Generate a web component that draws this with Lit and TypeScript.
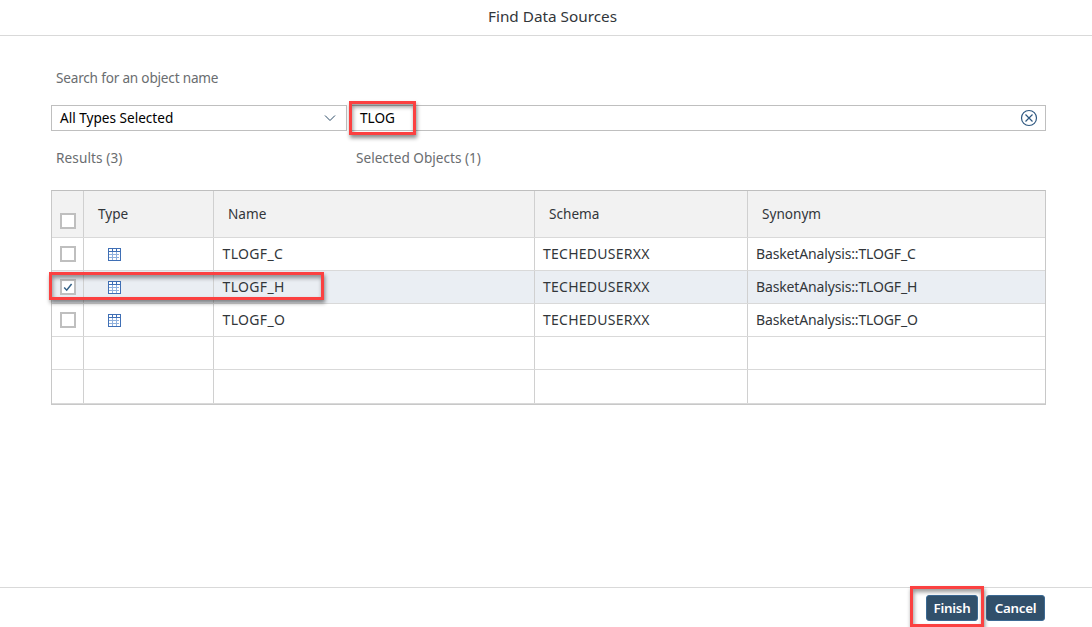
import { LitElement, html, css, svg, nothing } from "lit";
import { customElement, property } from "lit/decorators.js";

interface Source { name: string; schema: string; synonym: string; checked?: boolean }

const ROWS: (Source | null)[] = [
  { name: "TLOGF_C", schema: "TECHEDUSERXX", synonym: "BasketAnalysis::TLOGF_C" },
  { name: "TLOGF_H", schema: "TECHEDUSERXX", synonym: "BasketAnalysis::TLOGF_H", checked: true },
  { name: "TLOGF_O", schema: "TECHEDUSERXX", synonym: "BasketAnalysis::TLOGF_O" },
  null,
  null,
];

@customElement("check-box")
class CheckBox extends LitElement {
  @property({ type: Boolean }) checked = false;
  static styles = css`
    :host { display: block; box-sizing: border-box; width: 16px; height: 16px; border: 2px solid #bfbfbf; background: #fff; }
    svg { display: block; }
  `;
  render() {
    return this.checked
      ? html`<svg width="12" height="12" viewBox="0 0 12 12"><path d="M2.2 6.6 4.7 9.2 9.6 3" fill="none" stroke="#346187" stroke-width="1.5"/></svg>`
      : nothing;
  }
}

@customElement("table-icon")
class TableIcon extends LitElement {
  static styles = css`:host, svg { display: block; }`;
  render() {
    return html`<svg width="13" height="13" viewBox="0 0 13 13" shape-rendering="crispEdges">
      <rect width="13" height="13" rx="1" fill="#3f6fb5"/>
      <rect x="1" y="1" width="11" height="2" fill="#fff"/>
      <rect x="1" y="4" width="11" height="8" fill="#fff"/>
      <path d="M4.5 1v2M8.5 1v2" stroke="#3f6fb5"/>
      <path d="M4.5 4v8M8.5 4v8" stroke="#8fb0dd"/>
      ${[6, 9].map((y) => svg`<path d=${`M1 ${y + 0.5}h10`} stroke="#8fb0dd"/>`)}
    </svg>`;
  }
}

@customElement("app-root")
class AppRoot extends LitElement {
  static styles = css`
    * { box-sizing: border-box; }
    :host { display: flex; flex-direction: column; position: relative; width: 100%; height: 627px; overflow: hidden;
      background: #fff; color: #32363a; font: 13.6px/20px "Noto Sans", sans-serif; white-space: nowrap; }
    .title { height: 36px; border-bottom: 1px solid #d9d9d9; display: flex; justify-content: center; padding: 6px 0 0 13px; font-size: 15.3px; }
    .body { flex: 1; padding: 32px 46px 0 51px; }
    .muted { color: #6a6d70; }
    .label { padding-left: 5px; letter-spacing: -0.2px; }
    .search { display: flex; gap: 3px; margin-top: 17px; color: #000; }
    .box { height: 26px; border: 1px solid #bfbfbf; display: flex; align-items: center; justify-content: space-between; padding-left: 8px; }
    .select { width: 296px; padding-right: 10px; }
    .input { flex: 1; padding: 0 7px 0 9px; }
    .counts { display: grid; grid-template-columns: 300px 1fr; margin-top: 17px; padding-left: 5px; }
    .results { letter-spacing: 0.1px; }
    .table { margin-top: 22px; height: 215px; border: 1px solid #c8c8c8; border-top-color: #bfbfbf; }
    .row { display: grid; grid-template-columns: 32px 130px 321px 213px 1fr; height: 33px; border-bottom: 1px solid #d9d9d9; font-size: 14px; }
    .cell { border-right: 1px solid #d0d0d0; display: flex; align-items: center; padding-left: 8px; }
    .cell:last-child { border-right: 0; }
    .cell.check { padding-left: 8px; }
    .cell.icon { padding-left: 24px; }
    .name { letter-spacing: 0.35px; }
    .cell.name { padding-left: 8.5px; }
    .schema { letter-spacing: 0.25px; }
    .synonym { letter-spacing: -0.15px; }
    .head { height: 47px; background: #f2f2f2; font-size: 13.6px; }
    .head .cell { padding-left: 14px; }
    .head .check { padding: 13px 0 0 8px; }
    .selected { background: #eaeef3; }
    .row:last-child { height: 34px; }
    .footer { height: 40px; border-top: 1px solid #d9d9d9; display: flex; justify-content: flex-end; gap: 8px; padding: 7px 47px 0 0; }
    .button { height: 26px; border-radius: 3px; background: #31506b; border: 1px solid #3c6a94; color: #fff; font-size: 13.33px; font-weight: 600; text-align: center; line-height: 24px; letter-spacing: -0.25px; }
    .finish { width: 52px; }
    .cancel { width: 59px; }
    .mark { position: absolute; border: 3px solid #fb4141; box-shadow: 1px 3px 4px rgba(0,0,0,.45), inset 1px 3px 4px rgba(0,0,0,.4); }
    .mark-input { left: 349px; top: 101px; width: 67px; height: 34px; }
    .mark-row { left: 49px; top: 272px; width: 275px; height: 28px; }
    .mark-finish { left: 910px; top: 586px; width: 74px; height: 41px; }
  `;

  private row(r: Source | null) {
    return html`<div class="row ${r?.checked ? "selected" : ""}">
      <div class="cell check">${r ? html`<check-box ?checked=${!!r.checked}></check-box>` : nothing}</div>
      <div class="cell icon">${r ? html`<table-icon></table-icon>` : nothing}</div>
      <div class="cell name"><span>${r?.name}</span></div>
      <div class="cell schema"><span>${r?.schema}</span></div>
      <div class="cell synonym"><span>${r?.synonym}</span></div>
    </div>`;
  }

  render() {
    return html`
      <div class="title"><span>Find Data Sources</span></div>
      <div class="body">
        <div class="label muted">Search for an object name</div>
        <div class="search">
          <div class="box select"><span>All Types Selected</span>
            <svg width="12" height="8" viewBox="0 0 12 8"><path d="M1 1.5 6 6.5 11 1.5" fill="none" stroke="#2b4a66"/></svg>
          </div>
          <div class="box input"><span>TLOG</span>
            <svg width="18" height="18" viewBox="0 0 18 18" fill="none" stroke="#2f5880" stroke-width="1.2"><circle cx="9" cy="9" r="7.5"/><path d="m5.5 5.5 7 7m0-7-7 7"/></svg>
          </div>
        </div>
        <div class="counts muted"><span class="results">Results (3)</span><span>Selected Objects (1)</span></div>
        <div class="table">
          <div class="row head">
            <div class="cell check"><check-box></check-box></div>
            <div class="cell">Type</div><div class="cell">Name</div><div class="cell">Schema</div><div class="cell">Synonym</div>
          </div>
          ${ROWS.map((r) => this.row(r))}
        </div>
      </div>
      <div class="footer"><div class="button finish">Finish</div><div class="button cancel">Cancel</div></div>
      <div class="mark mark-input"></div><div class="mark mark-row"></div><div class="mark mark-finish"></div>`;
  }
}
